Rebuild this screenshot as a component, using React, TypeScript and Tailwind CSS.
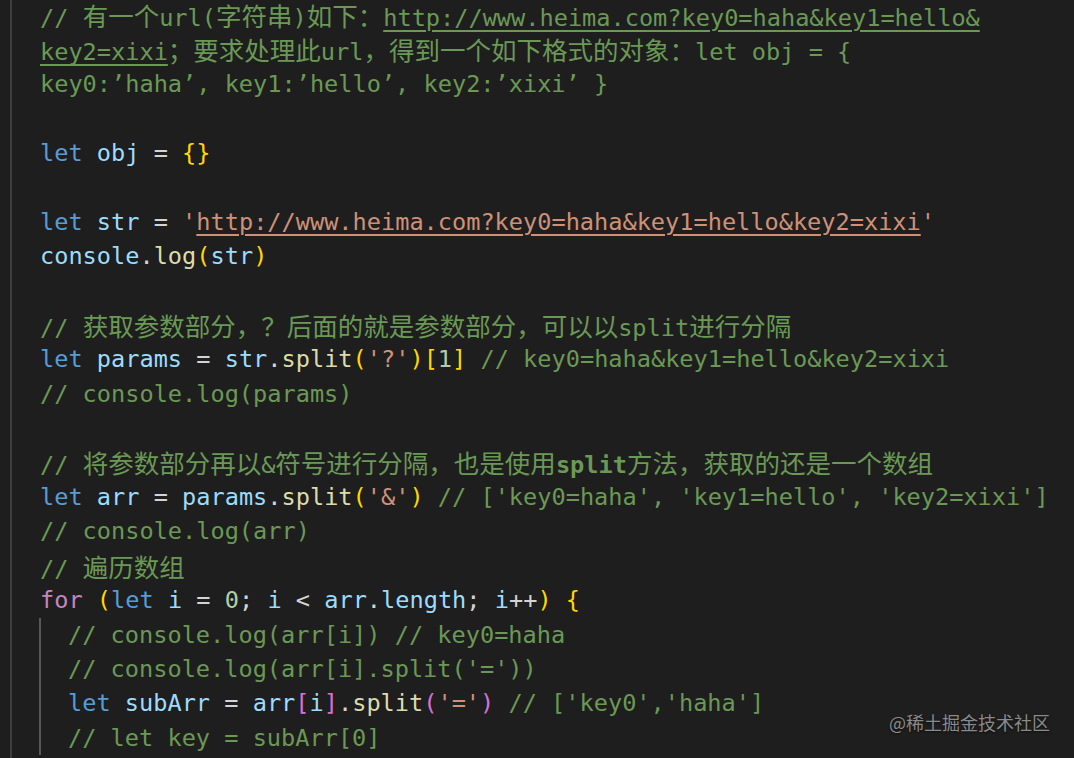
type Tok = [string, string?];

const cm = 'text-[#6a9955]';
const kw = 'text-[#569cd6]';
const v = 'text-[#9cdcfe]';
const fn = 'text-[#dcdcaa]';
const s = 'text-[#ce9178]';
const n = 'text-[#b5cea8]';
const b1 = 'text-[#ffd700]';
const b2 = 'text-[#da70d6]';
const ctl = 'text-[#c586c0]';
const ul = 'underline decoration-2 underline-offset-[4px]';

const top: Tok[][] = [
  [['// 有一个url(字符串)如下：', cm], ['http://www.heima.com?key0=haha&key1=hello&', `${cm} ${ul}`]],
  [['key2=xixi', `${cm} ${ul}`], ['；要求处理此url，得到一个如下格式的对象：let obj = {', cm]],
  [['key0:’haha’, key1:’hello’, key2:’xixi’ }', cm]],
  [],
  [['let', kw], [' '], ['obj', v], [' = '], ['{}', b1]],
  [],
  [['let', kw], [' '], ['str', v], [' = '], ["'", s], ['http://www.heima.com?key0=haha&key1=hello&key2=xixi', `${s} ${ul}`], ["'", s]],
  [['console', v], ['.'], ['log', fn], ['(', b1], ['str', v], [')', b1]],
  [],
  [['// 获取参数部分，？后面的就是参数部分，可以以split进行分隔', cm]],
  [['let', kw], [' '], ['params', v], [' = '], ['str', v], ['.'], ['split', fn], ['(', b1], ["'?'", s], [')', b1], ['[', b1], ['1', n], [']', b1], [' // key0=haha&key1=hello&key2=xixi', cm]],
  [['// console.log(params)', cm]],
  [],
  [['// 将参数部分再以&符号进行分隔，也是使用', cm], ['split', `${cm} font-bold`], ['方法，获取的还是一个数组', cm]],
  [['let', kw], [' '], ['arr', v], [' = '], ['params', v], ['.'], ['split', fn], ['(', b1], ["'&'", s], [')', b1], [" // ['key0=haha', 'key1=hello', 'key2=xixi']", cm]],
  [['// console.log(arr)', cm]],
  [['// 遍历数组', cm]],
  [['for', ctl], [' '], ['(', b1], ['let', kw], [' '], ['i', v], [' = '], ['0', n], ['; '], ['i', v], [' < '], ['arr', v], ['.'], ['length', v], ['; '], ['i', v], ['++'], [')', b1], [' '], ['{', b1]],
];

const inner: Tok[][] = [
  [['// console.log(arr[i]) // key0=haha', cm]],
  [["// console.log(arr[i].split('='))", cm]],
  [['let', kw], [' '], ['subArr', v], [' = '], ['arr', v], ['[', b2], ['i', v], [']', b2], ['.'], ['split', fn], ['(', b2], ["'='", s], [')', b2], [" // ['key0','haha']", cm]],
  [['// let key = subArr[0]', cm]],
];

const Txt = ({ t }: { t: string }) => {
  const parts = t.split(/([\u2E80-\u9FFF\uFF00-\uFFEF]+)/);
  return (
    <>
      {parts.map((p, i) =>
        i % 2 ? (
          <span key={i} className="font-['Noto_Sans_CJK_SC',sans-serif] text-[25.5px]">
            {p}
          </span>
        ) : (
          p
        )
      )}
    </>
  );
};

const Line = ({ toks }: { toks: Tok[] }) => (
  <div className="h-[34.43px] whitespace-pre leading-[34.43px]">
    {toks.map(([t, cls], i) => (
      <span key={i} className={cls ?? 'text-[#d4d4d4]'}>
        <Txt t={t} />
      </span>
    ))}
  </div>
);

export default function App() {
  return (
    <div className="relative h-[758px] w-[1074px] overflow-hidden bg-[#1e1e1e] font-['DejaVu_Sans_Mono','Noto_Sans_CJK_SC',monospace] text-[23.6px] text-[#d4d4d4]">
      <div className="-mt-[2px] ml-[10px] h-[762px] border-l-2 border-[#3e3e3e] pl-[28px]">
        {top.map((toks, i) => (
          <Line key={i} toks={toks} />
        ))}
        <div className="-ml-[1px] border-l-2 border-[#585858] pl-[27px]">
          {inner.map((toks, i) => (
            <Line key={i} toks={toks} />
          ))}
        </div>
      </div>
      <div className="absolute left-[889px] top-[709px] font-['Noto_Sans_CJK_SC',sans-serif] text-[18px] text-[#8a8a8a] [text-shadow:0_1px_2px_rgba(0,0,0,0.6)]">
        @稀土掘金技术社区
      </div>
    </div>
  );
}
